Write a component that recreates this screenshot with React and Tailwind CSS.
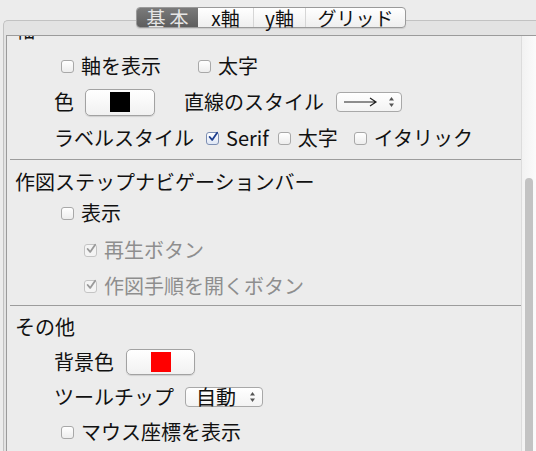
import React from 'react'

const Check = ({ checked = false, disabled = false }) => (
    <span
        className={`inline-flex w-[13px] h-[13px] shrink-0 items-center justify-center rounded-[3px] border ${
            disabled
                ? 'border-[#c4c4c4] bg-[#f4f4f4]'
                : checked
                ? 'border-[#7d8fb3] bg-gradient-to-b from-[#ffffff] to-[#dfe7f5]'
                : 'border-[#a8a8a8] bg-gradient-to-b from-[#ffffff] to-[#ededed]'
        }`}
    >
        {checked && (
            <svg width="12" height="12" viewBox="0 0 12 12" className="-mt-[2px] ml-[1px]">
                <path
                    d="M2 6 L5 9.5 L11 1"
                    fill="none"
                    stroke={disabled ? '#9a9a9a' : '#1f3f8f'}
                    strokeWidth="2.2"
                    strokeLinecap="round"
                    strokeLinejoin="round"
                />
            </svg>
        )}
    </span>
)

const CheckLabel = ({ label, checked, disabled, className = '' }) => (
    <span className={`flex items-center gap-[7px] ${className}`}>
        <Check checked={checked} disabled={disabled} />
        <span className={disabled ? 'text-[#8e8e8e]' : ''}>{label}</span>
    </span>
)

const ColorButton = ({ color, className = '' }) => (
    <span
        className={`flex items-center justify-center rounded-[5px] border border-[#a2a2a2] bg-gradient-to-b from-[#ffffff] to-[#f1f1f1] shadow-[0_1px_1px_rgba(0,0,0,0.12)] ${className}`}
    >
        <span className="w-[20px] h-[20px]" style={{ backgroundColor: color }} />
    </span>
)

const UpDown = () => (
    <svg width="7" height="12" viewBox="0 0 7 12">
        <path d="M3.5 1 L6 4.5 L1 4.5 Z" fill="#555" />
        <path d="M3.5 11 L6 7.5 L1 7.5 Z" fill="#555" />
    </svg>
)

const Select = ({ children, className = '' }) => (
    <span
        className={`flex items-center justify-between h-[20px] rounded-[4px] border border-[#a8a8a8] bg-gradient-to-b from-[#ffffff] to-[#f3f3f3] pr-[6px] ${className}`}
    >
        {children}
        <UpDown />
    </span>
)

const Divider = () => <div className="ml-[3px] h-[1px] bg-[#9c9c9c]" />

const tabs = [
    { label: '基本', w: 'w-[61px]', active: true },
    { label: 'x軸', w: 'w-[55px]' },
    { label: 'y軸', w: 'w-[52px]' },
    { label: 'グリッド', w: 'w-[100px]' },
]

export default function App() {
    return (
        <div
            className="relative w-[536px] h-[451px] overflow-hidden bg-[#ececec] text-[20px] leading-none text-[#111]"
            style={{ fontFamily: '"Noto Sans CJK JP", "Noto Sans", sans-serif' }}
        >
            <div className="flex h-full flex-col pt-[20px] pl-[3px]">
                {/* group box */}
                <div className="flex flex-1 flex-col rounded-tl-[5px] border-l border-t border-[#c2c2c2] bg-[#e3e3e3] pt-[14px] pl-[2px]">
                    {/* scroll pane */}
                    <div className="flex flex-1 overflow-hidden border-l border-t border-[#9b9b9b] bg-[#ececec]">
                        <div className="w-[514px] overflow-hidden">
                            {/* section 1 */}
                            <div className="-mt-[24px]">
                                <div className="flex h-[36px] items-center pl-[8px]">軸</div>
                                <div className="flex h-[36px] items-center pl-[54px]">
                                    <CheckLabel label="軸を表示" />
                                    <CheckLabel label="太字" className="ml-[37px]" />
                                </div>
                                <div className="flex h-[36px] items-center pl-[47px]">
                                    <span>色</span>
                                    <ColorButton color="#000" className="ml-[11px] w-[70px] h-[27px]" />
                                    <span className="ml-[29px]">直線のスタイル</span>
                                    <Select className="ml-[12px] w-[66px] pl-[7px]">
                                        <svg width="34" height="10" viewBox="0 0 34 10">
                                            <path d="M0 5 H32 M26 1 L32 5 L26 9" fill="none" stroke="#222" strokeWidth="1.2" />
                                        </svg>
                                    </Select>
                                </div>
                                <div className="flex h-[36px] items-center pl-[47px]">
                                    <span>ラベルスタイル</span>
                                    <CheckLabel label="Serif" checked className="ml-[12px]" />
                                    <CheckLabel label="太字" className="ml-[9px]" />
                                    <CheckLabel label="イタリック" className="ml-[16px]" />
                                </div>
                                <div className="h-[3px]" />
                            </div>
                            <Divider />

                            {/* section 2 */}
                            <div className="pt-[4px]">
                                <div className="flex h-[36px] items-center pl-[8px]">作図ステップナビゲーションバー</div>
                                <div className="flex h-[26px] items-center pl-[54px]">
                                    <CheckLabel label="表示" />
                                </div>
                                <div className="flex h-[48px] items-center pl-[77px]">
                                    <CheckLabel label="再生ボタン" checked disabled className="gap-[5px]" />
                                </div>
                                <div className="flex h-[24px] items-center pl-[77px]">
                                    <CheckLabel label="作図手順を開くボタン" checked disabled className="gap-[5px]" />
                                </div>
                                <div className="h-[7px]" />
                            </div>
                            <Divider />

                            {/* section 3 */}
                            <div className="pt-[3px]">
                                <div className="flex h-[36px] items-center pl-[8px]">その他</div>
                                <div className="flex h-[34px] items-center pl-[47px]">
                                    <span>背景色</span>
                                    <ColorButton color="#ff0000" className="ml-[12px] w-[69px] h-[26px]" />
                                </div>
                                <div className="flex h-[36px] items-center pl-[47px]">
                                    <span>ツールチップ</span>
                                    <Select className="ml-[11px] w-[78px] pl-[10px]">
                                        <span>自動</span>
                                    </Select>
                                </div>
                                <div className="flex h-[34px] items-center pl-[54px]">
                                    <CheckLabel label="マウス座標を表示" />
                                </div>
                            </div>
                        </div>

                        {/* scrollbar */}
                        <div className="flex flex-1 flex-col border-l border-[#dcdcdc] bg-gradient-to-r from-[#f2f2f2] to-[#fbfbfb] pt-[142px] pl-[3px] pr-[3px]">
                            <div className="flex-1 rounded-t-full bg-[#c3c3c3]" />
                        </div>
                    </div>
                </div>
            </div>

            {/* segmented tabs over the group box border */}
            <div className="absolute left-[136px] top-[7px] flex h-[21px] rounded-[4px] border border-[#9a9a9a] bg-gradient-to-b from-[#ffffff] to-[#efefef] text-[19px] leading-[19px] shadow-[0_1px_1px_rgba(0,0,0,0.1)]">
                {tabs.map((t, i) => (
                    <div
                        key={t.label}
                        className={`flex items-center justify-center ${t.w} ${
                            t.active
                                ? 'rounded-l-[3px] bg-gradient-to-b from-[#7a7a7a] to-[#5e5e5e] text-[#e6e6e6] tracking-[4px] pl-[4px]'
                                : 'text-[#111]'
                        } ${i > 1 ? 'border-l border-[#d6d6d6]' : ''}`}
                    >
                        {t.label}
                    </div>
                ))}
            </div>
        </div>
    )
}
